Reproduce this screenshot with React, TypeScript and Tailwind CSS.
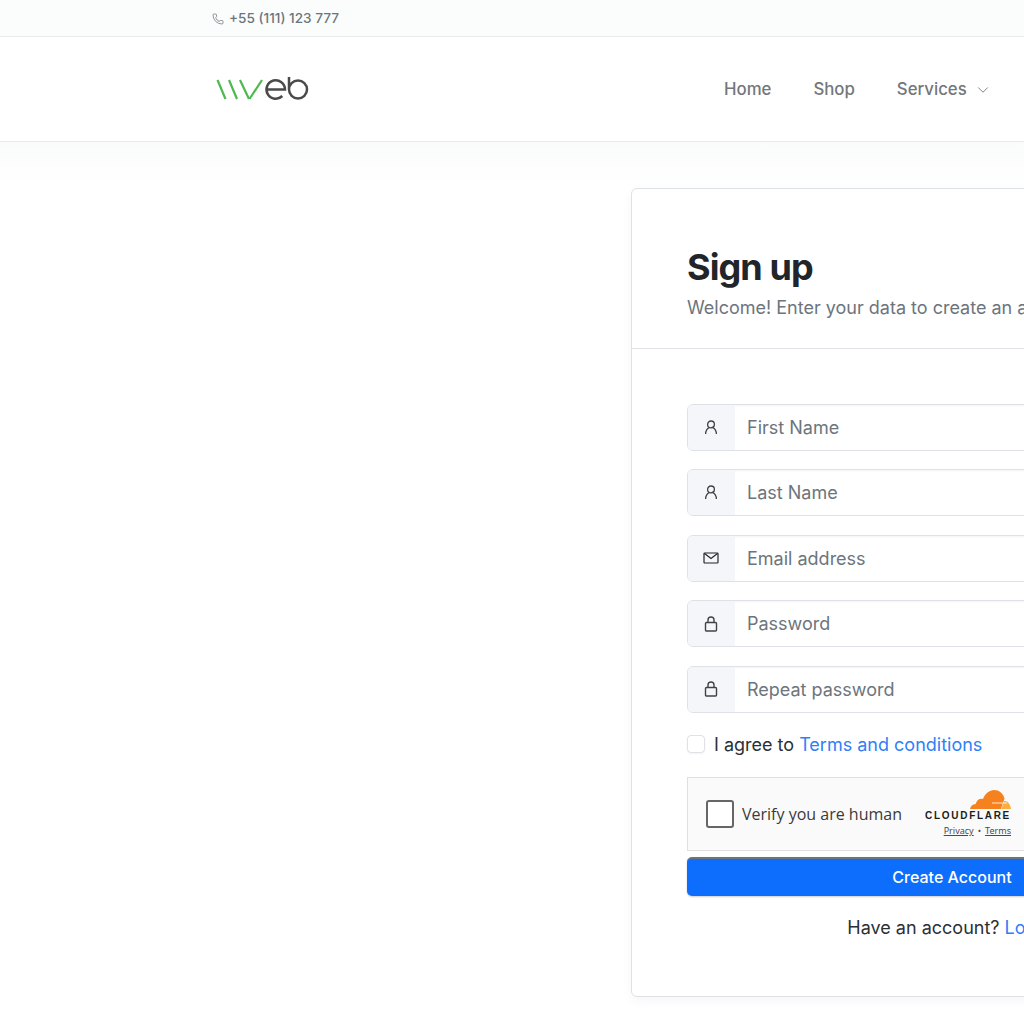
import { ChevronDown, Phone } from "lucide-react";

const fields = [
  { label: "First Name", icon: "user" },
  { label: "Last Name", icon: "user" },
  { label: "Email address", icon: "mail" },
  { label: "Password", icon: "lock" },
  { label: "Repeat password", icon: "lock" },
];

function FieldIcon({ name }: { name: string }) {
  if (name === "user") {
    return (
      <svg width="14" height="15" viewBox="0 0 14 15" fill="none" stroke="#3f4347" strokeWidth="1.3">
        <circle cx="7" cy="4.4" r="3.4" />
        <path d="M1.6 14c0-3 1.800-5.800 3.400-6.200M12.400 14c0-3-1.800-5.800-3.400-6.200" />
      </svg>
    );
  }
  if (name === "mail") {
    return (
      <svg width="16" height="12" viewBox="0 0 16 12" fill="none" stroke="#212529" strokeWidth="1.2">
        <rect x="1" y="1" width="14" height="10" rx="0.8" />
        <path d="M1.5 1.500 8 6.500l6.500-5" />
      </svg>
    );
  }
  return (
    <svg width="14" height="16" viewBox="0 0 14 16" fill="none" stroke="#3f4347" strokeWidth="1.4">
      <rect x="1.500" y="6.500" width="11" height="8.500" rx="1" />
      <path d="M4 6.500V4a3 3 0 0 1 6 0v2.500" />
    </svg>
  );
}

function Logo() {
  return (
    <svg width="94" height="26" viewBox="0 0 94 26" fill="none" className="block">
      <g stroke="#4fb84f" strokeWidth="2.2">
        <path d="M1.500 4 9.500 23" />
        <path d="M13 4 21 23" />
        <path d="M24 4 33 23" />
        <path d="M33.500 23 46 4" />
      </g>
      <g stroke="#4a4a4a" strokeWidth="2.500">
        <path d="M50.500 13.500h18.500a9.250 9.250 0 1 0-2.700 6.500" />
        <path d="M73 1v12.500a9 9 0 1 0 9-9A9 9 0 0 0 73 13.500" />
      </g>
    </svg>
  );
}

function Cloudflare() {
  return (
    <div className="flex w-[86px] flex-col items-end">
      <svg width="41" height="19" viewBox="0 0 41 19" className="block">
        <path d="M0 19c.6-3 2.600-4.800 5.600-5C7 9.500 10 8 13 9c2-5.500 6.500-9 11-9 5 0 9 3 10.500 8.500-1 3-2.500 7-3.500 10.500z" fill="#f6821f" />
        <path d="M31.500 19c1-3.500 1.800-6 2.600-8 3.600-.5 6 3 6.900 8z" fill="#fbad41" />
        <path d="M22 13h15" stroke="#fff" strokeWidth="0.8" />
      </svg>
      <div className="mt-[1px] font-['Liberation_Sans',sans-serif] text-[10px] leading-[11px] font-bold tracking-[1.7px] text-[#1d1d1d]">
        CLOUDFLARE
      </div>
      <div className="mt-[4px] flex items-center gap-[4px] font-['Noto_Sans',sans-serif] text-[9px] leading-[12px] text-[#4a4a4a]">
        <span className="underline">Privacy</span>
        <span>•</span>
        <span className="underline">Terms</span>
      </div>
    </div>
  );
}

export default function App() {
  return (
    <div className="h-[1024px] w-[1024px] overflow-hidden bg-white font-['Inter',sans-serif]">
      <div className="w-[1440px]">
        <div className="h-[37px] border-b border-[#e9ecef] bg-[#fbfcfc]">
          <div className="flex h-[36px] items-center gap-[5px] pt-[1px] pl-[212px] text-[13.600px] font-medium text-[#6c757d]">
            <Phone size={12} strokeWidth={1.5} />
            <span>+55 (111) 123 777</span>
          </div>
        </div>

        <header className="flex h-[105px] items-center border-b border-[#e9ecef] bg-white pr-[212px] pl-[216px]">
          <Logo />
          <nav className="mt-[2px] ml-[414px] flex items-center gap-[42px] text-[16.800px] font-medium text-[#73777b]">
            <span>Home</span>
            <span>Shop</span>
            <span className="flex items-center gap-[7px]">
              Services
              <ChevronDown size={18} strokeWidth={1.2} />
            </span>
          </nav>
        </header>

        <main className="h-[900px] bg-gradient-to-b from-[#fafbfb] to-white to-[46px] pt-[46px] pl-[631px]">
          <section className="h-[809px] w-[642px] rounded-[6px] border border-[#dee2e6] bg-white shadow-[0_4px_12px_rgba(0,0,0,0.04)]">
            <div className="h-[160px] border-b border-[#dee2e6] px-[55px] pt-[54px]">
              <h1 className="text-[36px] leading-[48px] font-bold tracking-[-0.9px] text-[#212529]">Sign up</h1>
              <p className="mt-[3px] text-[18px] leading-[27px] text-[#6c757d]">
                Welcome! Enter your data to create an account
              </p>
            </div>

            <form className="px-[55px] pt-[55px]">
              <div className="flex flex-col gap-[18.400px]">
                {fields.map((field) => (
                  <div
                    key={field.label}
                    className="flex h-[47px] overflow-hidden rounded-[6px] border border-[#dee2e6] shadow-[inset_0_1px_2px_rgba(0,0,0,0.05)]"
                  >
                    <span className="flex w-[47px] items-center justify-center bg-[#f5f6f9] pr-[2px]">
                      <FieldIcon name={field.icon} />
                    </span>
                    <span className="flex flex-1 items-center pl-[12px] text-[18px] text-[#6c757d]">{field.label}</span>
                  </div>
                ))}
              </div>

              <label className="mt-[18.400px] flex items-center gap-[9px] text-[18px] leading-[27px] text-[#2b3035]">
                <span className="h-[18px] w-[18px] rounded-[4px] border border-[#dee2e6] bg-white shadow-[0_1px_2px_rgba(0,0,0,0.05)]" />
                <span>
                  I agree to <span className="text-[#2f80f7]">Terms and conditions</span>
                </span>
              </label>

              <div className="mt-[19px] flex h-[74px] w-[530px] items-center border border-[#e0e0e0] bg-[#fafafa] pl-[18px]">
                <span className="h-[28px] w-[28px] rounded-[3px] border-2 border-[#666666] bg-white" />
                <span className="ml-[8px] font-['Open_Sans',sans-serif] text-[16px] text-[#3a3a3a]">Verify you are human</span>
                <div className="ml-[23px]">
                  <Cloudflare />
                </div>
              </div>

              <button
                type="button"
                className="mt-[6px] h-[39px] w-[530px] rounded-[5px] border-t-2 border-[#6c757d] bg-[#0d6efd] text-[16px] font-medium text-white shadow-[0_1px_2px_rgba(0,0,0,0.2)]"
              >
                Create Account
              </button>

              <p className="mt-[18px] text-center text-[18px] leading-[27px] text-[#2b3035]">
                Have an account? <span className="text-[#2f80f7]">Log in</span>
              </p>
            </form>
          </section>
        </main>
      </div>
    </div>
  );
}
